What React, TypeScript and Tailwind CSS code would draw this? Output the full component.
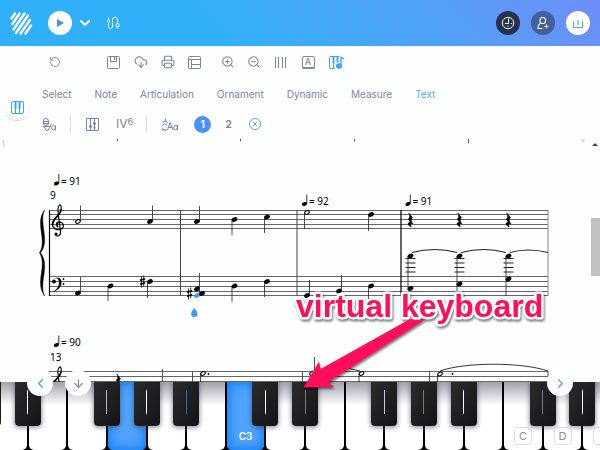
import type { ReactNode } from 'react';
import { ArrowDown, ChevronDown, ChevronLeft, ChevronRight, CloudDownload, Printer, RotateCcw, ZoomIn, ZoomOut } from 'lucide-react';

const TABS = ['Select', 'Note', 'Articulation', 'Ornament', 'Dynamic', 'Measure', 'Text'];

function Logo() {
  return (
    <svg width="24" height="26" viewBox="0 0 24 26" fill="none" stroke="#fff" strokeWidth="2.400" strokeLinecap="round">
      <path d="M2.500 8.500L6 3.500M3.500 14L10.500 3.500M4.500 19.500L15.500 3.500M7 23L19 5.500M11.500 23.500L21 10M16.500 23.500L22 15.500" />
    </svg>
  );
}

function CableIcon() {
  return (
    <svg width="14" height="14" viewBox="0 0 14 14" fill="none" stroke="#fff" strokeWidth="1">
      <path d="M2.500 1v2M2.500 7v3.500c0 2.500 4 2.500 4 0V3.500c0-3 5-3 5 0V7M11.500 10.500V13" />
      <rect x="1.500" y="3.500" width="2" height="3" rx="1" />
      <rect x="10" y="7.500" width="3" height="3.500" rx="1" />
    </svg>
  );
}

function ClockIcon() {
  return (
    <svg width="14" height="14" viewBox="0 0 14 14" fill="none" stroke="#fff" strokeWidth="1">
      <circle cx="7" cy="7" r="5.700" />
      <path d="M7.500 2.500v5H4" />
      <path d="M7 9.500v1.500M9.500 7.500H11" strokeWidth="0.8" />
    </svg>
  );
}

function AddUserIcon() {
  return (
    <svg width="14" height="14" viewBox="0 0 14 14" fill="none" stroke="#fff" strokeWidth="1.100">
      <rect x="4" y="1.500" width="5.500" height="6" rx="2.500" />
      <path d="M4.500 7.500C2.500 8 2 9.500 2 12.500h5M10.500 8.500v4M8.500 10.500h4" />
    </svg>
  );
}

function ShareIcon() {
  return (
    <svg width="12" height="12" viewBox="0 0 12 12" fill="none" stroke="#4da6f8" strokeWidth="1.200">
      <path d="M1.500 4.500v6h9v-6M6 3v5" />
    </svg>
  );
}

function SaveIcon() {
  return (
    <svg width="13" height="13" viewBox="0 0 13 13" fill="none" stroke="currentColor">
      <rect x="0.5" y="0.5" width="12" height="12" rx="1" />
      <path d="M3.500 1v4.500h6V1M7.500 1v3" />
    </svg>
  );
}

function LayoutIcon() {
  return (
    <svg width="13" height="13" viewBox="0 0 13 13" fill="none" stroke="currentColor">
      <rect x="0.5" y="0.5" width="12" height="12" rx="1" />
      <path d="M1 3.500h11M3.500 4v8.500M4 8.500h8" />
    </svg>
  );
}

function BarsIcon() {
  return (
    <svg width="11" height="11" viewBox="0 0 11 11" stroke="currentColor" strokeWidth="1">
      <path d="M0.5 0v11M3.500 0v11M7.500 0v11M10.500 0v11" />
    </svg>
  );
}

function LetterIcon() {
  return (
    <span className="flex size-[13px] items-center justify-center rounded-xs border border-b-2 border-[#8087a5] text-[9px] leading-none font-medium">
      A
    </span>
  );
}

function PianoNoteIcon() {
  return (
    <svg width="16" height="13" viewBox="0 0 16 13" fill="none" stroke="#4a9ff8">
      <path d="M6 12.500H2a1.500 1.500 0 0 1-1.500-1.500V2A1.500 1.500 0 0 1 2 0.500h8.500M4.500 7v5" />
      <path d="M4.500 0.500v7M8.500 0.500v6" strokeWidth="2" />
      <path d="M12 10V1.500c1 0 2 .5 3 1.500" strokeWidth="1.400" />
      <ellipse cx="10" cy="10" rx="2.800" ry="2.300" fill="#4a9ff8" />
    </svg>
  );
}

function PianoIcon() {
  return (
    <svg width="13" height="13" viewBox="0 0 13 13" fill="none" stroke="#4a9ff8">
      <rect x="0.5" y="0.5" width="12" height="12" rx="1.500" />
      <path d="M4.500 1v7M8.500 1v7" strokeWidth="2" />
      <path d="M4.500 8v4M8.500 8v4" />
    </svg>
  );
}

function LyricsIcon() {
  return (
    <svg width="15" height="13" viewBox="0 0 15 13" fill="none" stroke="currentColor">
      <rect x="1.500" y="0.5" width="5" height="7" rx="2.500" />
      <path d="M1 3.500h6M1 5.500h6M0.5 8.500h7M2.500 9l1.500 3.500h2L9.500 6" />
      <ellipse cx="11.500" cy="9.800" rx="1.800" ry="2.200" />
      <path d="M13.500 7.500v5" />
    </svg>
  );
}

function MixerIcon() {
  return (
    <svg width="13" height="13" viewBox="0 0 13 13" fill="none" stroke="currentColor">
      <rect x="0.5" y="0.5" width="12" height="12" rx="0.5" />
      <path d="M4.500 1v11M8.500 1v11" />
      <path d="M3 8.500h3M7 5.500h3M7.500 9.500h2" strokeWidth="2" />
    </svg>
  );
}

function TempoTextIcon() {
  return (
    <svg width="18" height="13" viewBox="0 0 18 13" fill="none" stroke="currentColor">
      <path d="M4.500 0.500v3M1.500 5c1-2 5-2 5.500 0M1 8c1-2.500 4-2.500 5-1M1 12h5M2 9.500c-1 1 0 2.500 2 2" />
      <path d="M6.500 12L9 4.500l3 7.500M7.500 9.500h4" />
      <ellipse cx="14.500" cy="9.500" rx="1.800" ry="2.300" />
      <path d="M16.500 7v5" />
    </svg>
  );
}

function ToolButton({ label, wide, children }: { label: string; wide?: boolean; children: ReactNode }) {
  return (
    <button aria-label={label} className={`flex h-5 items-center justify-center ${wide ? 'w-[27px]' : 'w-[26px]'}`}>
      {children}
    </button>
  );
}

type NoteProps = { x: number; y: number; stem?: number; up?: boolean; half?: boolean; color?: string };

function Note({ x, y, stem, up, half, color = '#000' }: NoteProps) {
  const sx = up ? x + 2.5 : x - 2.5;
  return (
    <g>
      <ellipse
        cx={x}
        cy={y}
        rx={half ? 2.4 : 3}
        ry={half ? 1.7 : 2.2}
        transform={`rotate(-25 ${x} ${y})`}
        fill={half ? '#fff' : color}
        stroke={half ? color : 'none'}
        strokeWidth="1.100"
      />
      {stem !== undefined && <path d={`M${sx} ${y}V${stem}`} stroke="#222" strokeWidth="0.8" />}
    </g>
  );
}

function Tempo({ x, y, value }: { x: number; y: number; value: number }) {
  return (
    <g>
      <ellipse cx={x} cy={y - 1} rx="2.600" ry="1.900" transform={`rotate(-20 ${x} ${y - 1})`} />
      <path d={`M${x + 2.3} ${y - 1}v-9.500`} stroke="#000" strokeWidth="0.8" />
      <text x={x + 4.5} y={y}>{`= ${value}`}</text>
    </g>
  );
}

function Sharp({ x, y }: { x: number; y: number }) {
  return (
    <g transform={`translate(${x} ${y})`} stroke="#000">
      <path d="M-1 -5V6M1.200 -6V5" strokeWidth="0.8" />
      <path d="M-2.500 -1.200L2.700 -2.800M-2.500 2.800L2.700 1.200" strokeWidth="1.500" />
    </g>
  );
}

function Rest({ x, y }: { x: number; y: number }) {
  return (
    <path
      transform={`translate(${x} ${y})`}
      d="M-1.800 -7L2 -2.500C0.300 -0.500 0.300 1 2.600 4C0.500 3.200 -0.800 4.200 0.800 7C-3.600 5.200 -3 1.800 0 2.300L-2.200 -0.800C-0.300 -3 -0.600 -4.500 -1.800 -7Z"
      stroke="#000"
      strokeWidth="0.5"
    />
  );
}

function TrebleClef({ y }: { y: number }) {
  return (
    <g transform={`translate(0 ${y})`} fill="none" stroke="#000" strokeLinecap="round">
      <path d="M58 22.500C55.500 21 56 17.500 59 17.500C63.500 17.500 64.500 22 62 24C58.500 26.500 53 25 52.500 20.500C52.200 16.500 55 14 57.500 11.500C60.500 8.500 62 5.500 61 1.500C60.300 -1 58.500 1 58 4C57.600 7 59 14 60.500 27C61 31.500 57 32.500 55.500 30.500" strokeWidth="1.100" />
      <path d="M52.600 20.500C52.400 16.500 55 14 57.500 11.500C59.500 9.500 60.800 7.500 61.100 5M57 21C56.500 18.500 58 17.600 60 17.800" strokeWidth="1.700" />
      <circle cx="56" cy="29.500" r="1.600" fill="#000" stroke="none" />
    </g>
  );
}

function Score() {
  return (
    <svg
      className="h-full min-w-0 flex-1"
      viewBox="0 138 590 244"
      preserveAspectRatio="xMinYMin slice"
      fontFamily="'Noto Sans', sans-serif"
      fontSize="10"
      role="img"
      aria-label="Score"
    >
      <text x="1" y="147" fontSize="8" fill="#c4c4c4">1</text>
      <path d="M117.500 139v2M240.500 139v2.500M354.500 139v2.500M468.500 139v4" stroke="#555" />
      <path d="M581 139.500h4l-2 3z" fill="#ccc" />

      <Tempo x={56.5} y={184.5} value={91} />
      <Tempo x={304.5} y={205} value={92} />
      <Tempo x={408} y={205} value={91} />
      <Tempo x={56.5} y={346} value={90} />
      <text x="50" y="199">9</text>
      <text x="50" y="361">13</text>

      <path
        d="M49 210.500H548M49 214.500H548M49 219.500H548M49 224.500H548M49 228.500H548M49 276.500H548M49 281.500H548M49 286.500H548M49 291.500H548M49 295.500H548M49 371.500H548M49 376.500H548M49 381.500H548"
        stroke="#666"
      />
      <path d="M49.500 210V296M401 210V296" stroke="#000" strokeWidth="1.200" />
      <path d="M180.500 210V296M297 210V296" stroke="#444" />
      <path d="M548 210V296" stroke="#888" />
      <path
        d="M44.500 210C34.500 224 47.500 240 39.500 252.800C47.500 266 34.500 282 44.500 296C38.500 282 50.500 266 40.500 252.800C50.500 240 38.500 224 44.500 210Z"
        stroke="#000"
        strokeWidth="0.5"
      />

      <TrebleClef y={204.500} />
      <path d="M53 282C52 277.500 61.500 275 61.500 282.500C61.500 287.500 57 290.500 52.500 292.500C56.500 289.500 59 287 59 282.500C59 278.500 56 277 53.500 279.500Z" />
      <circle cx="54" cy="281.500" r="1.900" />
      <circle cx="63.500" cy="279" r="0.900" />
      <circle cx="63.500" cy="284" r="0.900" />

      <Note x={78} y={221.5} stem={205.5} up half />
      <Note x={150} y={221.5} stem={205.5} up />
      <Note x={197} y={221.5} stem={206} up />
      <Note x={234.5} y={219.5} stem={235.5} />
      <Note x={267} y={217} stem={233} />
      <Note x={307} y={212.5} stem={229} half />
      <Note x={371} y={214.5} stem={231} />

      <Note x={78} y={293} stem={277} up />
      <Note x={110.5} y={286} stem={301} />
      <Sharp x={142.5} y={281.5} />
      <Note x={150} y={281.5} stem={298} />
      <Sharp x={189.5} y={293.5} />
      <Note x={197} y={295.5} color="#4a94f8" />
      <Note x={197} y={289} stem={273} up />
      <Note x={202} y={293.5} />
      <path d="M199.500 288V295" stroke="#222" strokeWidth="0.8" />
      <Note x={234.5} y={286} stem={302} />
      <Note x={267} y={281.5} stem={297} />
      <Note x={307} y={295.5} stem={280} up />
      <Note x={339} y={291} stem={275} up />
      <Note x={371} y={286} stem={302} />
      <path d="M194.300 307.500C195.500 310 197.500 311.500 197.500 313.700A3.200 3.200 0 0 1 191.100 313.700C191.100 311.500 193.200 310 194.300 307.500Z" fill="#4a94f8" />

      {[410.5, 459.5, 508.5].map((x, i) => (
        <g key={x}>
          <Rest x={x} y={220} />
          <Note x={x} y={256} stem={[290, 291, 296][i]} />
          <Note x={x} y={[288.5, 284, 279][i]} />
          <path d={`M${x - 5} 258.500h10M${x - 5} 263h10M${x - 5} 267.500h10M${x - 5} 272h10`} stroke="#222" />
        </g>
      ))}
      <path d="M412 252.500Q435 246.500 457 252.500M461 252.500Q484 246.500 506 252.500M510 252.500Q528 247.500 548 252.500" fill="none" stroke="#222" strokeWidth="1.100" />

      <TrebleClef y={366.5} />
      <Rest x={118.500} y={381} />
      <path d="M162.500 369V382M192.500 371V382M302.500 371V382M429.500 371V382M548 371V376" stroke="#444" strokeWidth="0.9" />
      <Note x={203} y={373.5} stem={382} half />
      <circle cx="208.500" cy="374" r="0.900" />
      <Note x={312} y={373.5} stem={357} up half />
      <Note x={361.5} y={373.5} stem={382} half />
      <Note x={440} y={374} stem={382} half />
      <circle cx="452.500" cy="374" r="0.900" />
      <path d="M314 371Q338 364 360 371M440 371C465 362 522 362 548 371" fill="none" stroke="#222" strokeWidth="0.9" />
    </svg>
  );
}

type Key = { id: number; black?: boolean; pressed?: boolean; blackTone?: string; label?: string; hint?: string };

const KEYS: Key[] = [
  { id: 0, black: true, blackTone: 'bg-white' },
  { id: 1 },
  { id: 2, black: true, blackTone: 'bg-[#bbb]' },
  { id: 3, black: true, pressed: true, blackTone: 'bg-white' },
  { id: 4, black: true, blackTone: 'bg-[#2f6ab8]' },
  { id: 5 },
  { id: 6, black: true, pressed: true, label: 'C3', blackTone: 'bg-white' },
  { id: 7, black: true, blackTone: 'bg-[#777]' },
  { id: 8 },
  { id: 9, black: true, blackTone: 'bg-[#ccc]' },
  { id: 10, black: true, blackTone: 'bg-[#777]' },
  { id: 11, black: true, blackTone: 'bg-white' },
  { id: 12 },
  { id: 13, black: true, blackTone: 'bg-[#777]', hint: 'C' },
  { id: 14, black: true, blackTone: 'bg-white', hint: 'D' },
  { id: 15, hint: '' },
];

function Keyboard() {
  return (
    <div className="relative h-[68px] shrink-0">
      <div className="h-full overflow-hidden bg-black">
        <div className="relative -mr-[22px] -ml-[12px] flex h-full">
          <div className="absolute top-0 -left-[13px] z-10 h-11 w-[26px] rounded-b bg-[#1c1c1e]" />
          {KEYS.map((key) => (
            <div key={key.id} className="relative min-w-0 flex-1 px-px">
              <button
                aria-label={key.label ?? `Key ${key.id}`}
                className={`flex h-full w-full items-end justify-center rounded-b-[5px] ${
                  key.pressed
                    ? 'bg-[#4fa2fa] pb-2 shadow-[inset_0_0_8px_3px_#1683f5]'
                    : 'bg-linear-to-b from-[#a2a2ac] via-[#d8d8de] via-20% to-white to-34% pb-[5px]'
                }`}
              >
                {key.label && <span className="text-[10px] leading-3 font-semibold text-white">{key.label}</span>}
                {key.hint !== undefined && (
                  <span className="flex size-[18px] items-center justify-center rounded border border-[#dcdde6] text-[11px] leading-none text-[#8a8fab]">
                    {key.hint}
                  </span>
                )}
              </button>
              {key.black && (
                <button
                  aria-label={`Sharp ${key.id}`}
                  className="absolute top-0 -right-[13px] z-10 flex h-11 w-[26px] justify-center rounded-b bg-linear-to-br from-[#2b2b2d] to-[#141416] pt-2 shadow-[0_1px_4px_1px_rgba(60,60,80,0.5)]"
                >
                  <span className={`h-6 w-px ${key.blackTone}`} />
                </button>
              )}
            </div>
          ))}
        </div>
      </div>
      <button aria-label="Scroll left" className="absolute -top-3 left-[27px] z-20 flex size-[26px] items-center justify-center rounded-full bg-white text-[#4a9ff8]">
        <ChevronLeft size={15} strokeWidth={2} />
      </button>
      <button aria-label="Hide keyboard" className="absolute -top-3 left-[65px] z-20 flex size-[26px] items-center justify-center rounded-full bg-white text-[#6f86b8]">
        <ArrowDown size={13} strokeWidth={2} />
      </button>
      <button aria-label="Scroll right" className="absolute -top-3 right-[27px] z-20 flex size-[26px] items-center justify-center rounded-full bg-white text-[#4a9ff8]">
        <ChevronRight size={15} strokeWidth={2} />
      </button>
    </div>
  );
}

function Callout() {
  return (
    <svg
      className="pointer-events-none absolute bottom-[50px] left-[286px] z-30 drop-shadow-[1px_2px_1px_rgba(0,0,0,0.5)]"
      width="270"
      height="120"
      viewBox="286 280 270 120"
    >
      <path d="M303.500 387.500L319 361.500L320.500 369L410 319H426L328.500 382L334 387Z" fill="#ff0f5b" />
      <text
        x="296"
        y="317"
        fontFamily="'Liberation Sans', Arial, sans-serif"
        fontWeight="700"
        fontSize="32"
        fill="#ff0f5b"
        stroke="#fff"
        strokeWidth="5"
        strokeLinejoin="round"
        paintOrder="stroke"
      >
        virtual keyboard
      </text>
    </svg>
  );
}

export default function App() {
  return (
    <div className="relative flex h-screen flex-col overflow-hidden bg-[#fdfefe] font-['Inter',sans-serif] text-[#7d84a3]">
      <header className="flex h-[46px] shrink-0 items-center bg-linear-45 from-[#30b0f9] from-35% via-[#4fa1f9] via-70% to-[#6d8df6] pr-[10px] pl-[9px]">
        <Logo />
        <button aria-label="Play" className="ml-[15px] flex size-6 items-center justify-center rounded-full bg-white">
          <svg width="8" height="8" viewBox="0 0 8 8" fill="#4b8ff8">
            <path d="M1 0L8 4L1 8Z" />
          </svg>
        </button>
        <button aria-label="Playback options" className="ml-[5px] text-white">
          <ChevronDown size={16} strokeWidth={3} />
        </button>
        <button aria-label="Connect" className="ml-[13px]">
          <CableIcon />
        </button>
        <div className="ml-auto flex gap-[11px]">
          <button aria-label="History" className="flex size-6 items-center justify-center rounded-full bg-[#26334d]">
            <ClockIcon />
          </button>
          <button aria-label="Invite" className="flex size-6 items-center justify-center rounded-full bg-[#425f9e]">
            <AddUserIcon />
          </button>
          <button aria-label="Share" className="flex size-6 items-center justify-center rounded-full bg-white">
            <ShareIcon />
          </button>
        </div>
      </header>

      <div className="flex h-[92px] shrink-0">
        <div className="w-8 shrink-0 pt-[49px] pl-[4px]">
          <button aria-label="Instrument" className="flex size-[26px] items-center justify-center rounded-full border-b border-[#d5d7dd]">
            <PianoIcon />
          </button>
        </div>
        <div className="min-w-0 flex-1">
          <div className="flex h-8 items-center pl-[9px]">
            <ToolButton label="Undo" wide><RotateCcw size={12} strokeWidth={1.8} /></ToolButton>
            <div className="ml-8 flex">
              <ToolButton label="Save" wide><SaveIcon /></ToolButton>
              <ToolButton label="Export" wide><CloudDownload size={14} strokeWidth={1.8} /></ToolButton>
              <ToolButton label="Print" wide><Printer size={14} strokeWidth={1.8} /></ToolButton>
              <ToolButton label="Layout" wide><LayoutIcon /></ToolButton>
            </div>
            <div className="ml-[7px] flex">
              <ToolButton label="Zoom in"><ZoomIn size={14} strokeWidth={1.8} /></ToolButton>
              <ToolButton label="Zoom out"><ZoomOut size={14} strokeWidth={1.8} /></ToolButton>
              <ToolButton label="Page view"><BarsIcon /></ToolButton>
            </div>
            <div className="ml-0.5 flex gap-[3px]">
              <ToolButton label="Annotations"><LetterIcon /></ToolButton>
              <ToolButton label="Piano input"><PianoNoteIcon /></ToolButton>
            </div>
          </div>
          <nav className="flex h-8 items-center gap-[23px] pl-[10px] text-[10px]">
            {TABS.map((tab) => (
              <button key={tab} className={tab === 'Text' ? 'text-[#5ba4f9]' : ''}>{tab}</button>
            ))}
          </nav>
          <div className="flex h-7 items-center pl-[10px]">
            <button aria-label="Lyrics"><LyricsIcon /></button>
            <span className="ml-[13px] h-4 w-px bg-[#dcdee8]" />
            <button aria-label="Chord grid" className="ml-[15px]"><MixerIcon /></button>
            <button className="ml-[17px] flex text-[12px] leading-4">
              IV<span className="text-[9px] leading-3">6</span>
            </button>
            <span className="ml-[13px] h-4 w-px bg-[#dcdee8]" />
            <button aria-label="Tempo text" className="ml-[14px]"><TempoTextIcon /></button>
            <button className="ml-[15px] flex size-[17px] items-center justify-center rounded-full bg-[#4b8ff8] text-[10px] font-bold text-white">1</button>
            <button className="ml-[10px] w-[15px] text-[10px] font-bold">2</button>
            <button aria-label="Clear" className="ml-[13px]">
              <svg width="12" height="12" viewBox="0 0 12 12" fill="none" stroke="#5ba4f9">
                <circle cx="6" cy="6" r="5.500" />
                <path d="M4.200 4.200l3.600 3.600M7.800 4.200L4.200 7.800" />
              </svg>
            </button>
          </div>
        </div>
      </div>

      <main className="flex min-h-0 flex-1">
        <Score />
        <div className="flex w-[10px] shrink-0 flex-col items-center pt-[5px]">
          <span className="border-x-3 border-b-3 border-x-transparent border-b-[#444]" />
          <span className="mt-[72px] ml-px h-[58px] w-[9px] bg-[#c1c1c1]" />
        </div>
      </main>
      <Keyboard />
      <Callout />
    </div>
  );
}
